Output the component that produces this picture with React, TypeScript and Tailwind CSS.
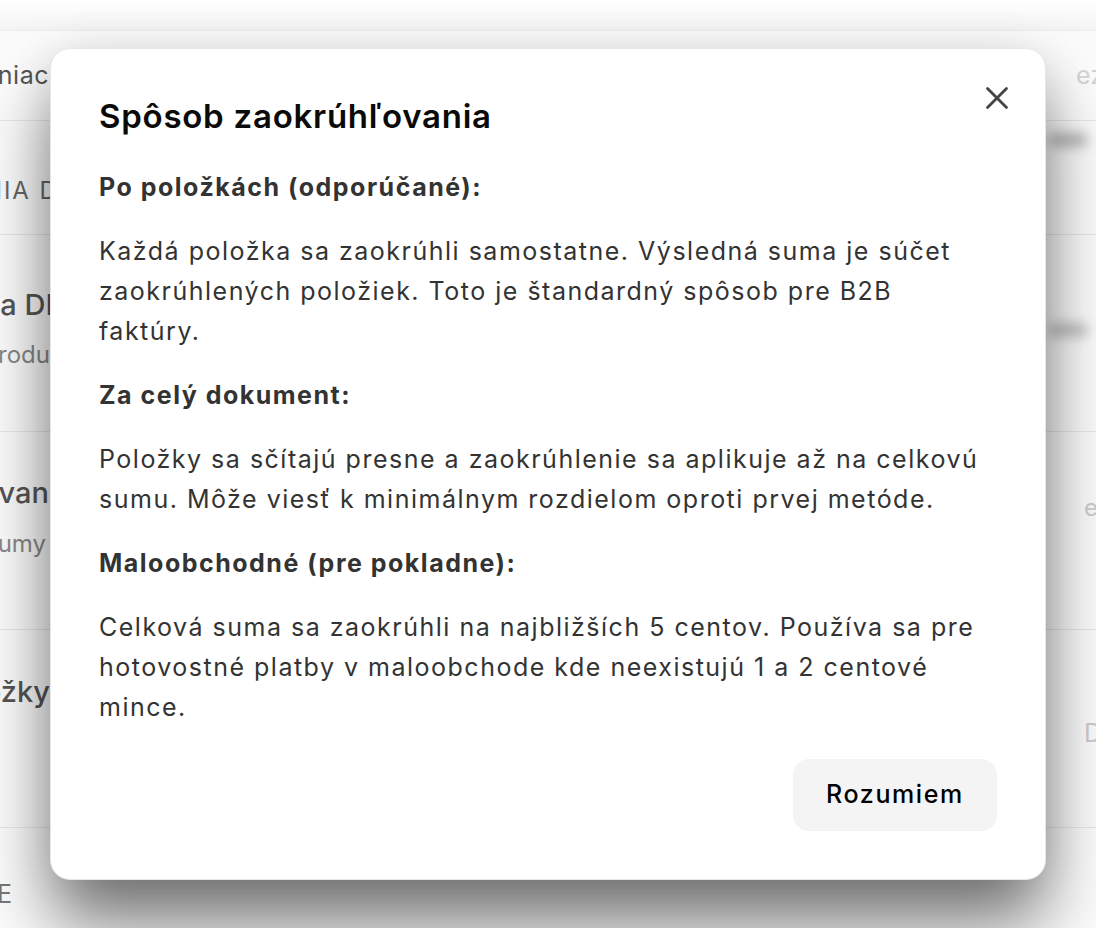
import { X } from "lucide-react";

const sections = [
  {
    title: "Po položkách (odporúčané):",
    body: "Každá položka sa zaokrúhli samostatne. Výsledná suma je súčet zaokrúhlených položiek. Toto je štandardný spôsob pre B2B faktúry.",
  },
  {
    title: "Za celý dokument:",
    body: "Položky sa sčítajú presne a zaokrúhlenie sa aplikuje až na celkovú sumu. Môže viesť k minimálnym rozdielom oproti prvej metóde.",
  },
  {
    title: "Maloobchodné (pre pokladne):",
    body: "Celková suma sa zaokrúhli na najbližších 5 centov. Používa sa pre hotovostné platby v maloobchode kde neexistujú 1 a 2 centové mince.",
  },
];

// settings list that sits behind the dialog, only its edges show
function BackgroundPage() {
  return (
    <div className="flex h-[928px] w-full flex-col overflow-hidden bg-[#fcfcfc] text-[#555]">
      <div className="h-[31px] shrink-0 border-b border-[#ececec] bg-gradient-to-b from-white to-[#f4f4f4]" />
      <div className="flex h-[90px] shrink-0 items-center justify-between border-b border-[#e8e8e8]">
        <div className="flex w-[49px] justify-end overflow-hidden whitespace-nowrap text-[25px] tracking-[0.5px] text-[#555]">
          Oceniac
        </div>
        <div className="w-[20px] overflow-hidden whitespace-nowrap text-[25px] text-[#d4d4d4]">
          ez
        </div>
      </div>
      <div className="flex h-[114px] shrink-0 items-start justify-between border-b border-[#e8e8e8]">
        <div className="mt-[52px] flex w-[76px] justify-end overflow-hidden whitespace-nowrap text-[24px] tracking-[0.08em] text-[#666]">
          NASTAVENIA DP
        </div>
        <div className="mr-[8px] mt-[12px] h-[14px] w-[40px] rounded-full bg-[#bbb] blur-[6px]" />
      </div>
      <div className="flex h-[197px] shrink-0 flex-col justify-center border-b border-[#e8e8e8] pb-[20px]">
        <div className="flex items-center justify-between">
          <div className="flex w-[64px] justify-end overflow-hidden whitespace-nowrap text-[29px] font-medium text-[#555]">
            Sadzba DP
          </div>
          <div className="mr-[8px] mt-[50px] h-[14px] w-[40px] rounded-full bg-[#c4c4c4] blur-[6px]" />
        </div>
        <div className="flex w-[50px] justify-end overflow-hidden whitespace-nowrap text-[24px] text-[#888]">
          Pre produ
        </div>
      </div>
      <div className="flex h-[198px] shrink-0 flex-col justify-center border-b border-[#e8e8e8] pb-[40px]">
        <div className="flex items-center justify-between">
          <div className="flex w-[49px] justify-end overflow-hidden whitespace-nowrap text-[29px] font-medium text-[#555]">
            Zaokrúhľovan
          </div>
          <div className="w-[12px] overflow-hidden whitespace-nowrap pt-[30px] text-[24px] text-[#ccc]">
            e
          </div>
        </div>
        <div className="flex w-[46px] justify-end overflow-hidden whitespace-nowrap text-[24px] text-[#888]">
          Sumy
        </div>
      </div>
      <div className="flex h-[198px] shrink-0 items-start justify-between border-b border-[#e8e8e8] pt-[40px]">
        <div className="flex w-[50px] justify-end overflow-hidden whitespace-nowrap text-[29px] font-medium text-[#555]">
          Položky
        </div>
        <div className="w-[12px] overflow-hidden whitespace-nowrap pt-[45px] text-[25px] text-[#ccc]">
          D
        </div>
      </div>
      <div className="flex h-[100px] shrink-0 items-start pt-[48px]">
        <div className="flex w-[12px] justify-end overflow-hidden whitespace-nowrap text-[25px] text-[#777]">
          E
        </div>
      </div>
    </div>
  );
}

export default function App() {
  return (
    <div
      className="relative h-[928px] w-[1096px] overflow-hidden"
      style={{ fontFamily: "Inter, 'Noto Sans', sans-serif" }}
    >
      <BackgroundPage />
      <div className="absolute inset-0 flex items-center justify-center">
        <div className="relative flex w-[996px] flex-col rounded-[20px] border border-[#e6e6e6] bg-white p-12 shadow-[0_44px_70px_-2px_rgba(0,0,0,0.55),0_0_44px_rgba(0,0,0,0.08)]">
          <button className="absolute right-[29px] top-[30px] flex h-[38px] w-[38px] items-center justify-center text-[#444]">
            <X size={38} strokeWidth={1.75} />
          </button>
          <h2 className="text-[33px] font-semibold leading-[38px] tracking-[0.75px] text-[#0a0a0a]">
            Spôsob zaokrúhľovania
          </h2>
          <div className="mt-8 flex flex-col gap-6 text-[25px] leading-[40px] tracking-[1.5px] text-[#333]">
            {sections.map((s) => (
              <div key={s.title} className="flex flex-col gap-6">
                <p className="font-bold">{s.title}</p>
                <p>{s.body}</p>
              </div>
            ))}
          </div>
          <div className="mt-8 flex justify-end">
            <button className="h-[72px] w-[204px] rounded-2xl bg-[#f4f4f4] text-[25px] font-medium tracking-[1.6px] text-black">
              Rozumiem
            </button>
          </div>
        </div>
      </div>
    </div>
  );
}
